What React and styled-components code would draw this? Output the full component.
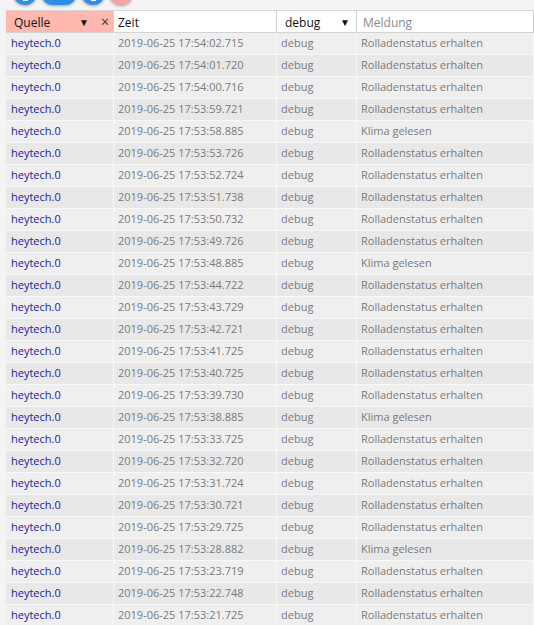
import React from "react";
import styled, { createGlobalStyle } from "styled-components";

const Global = createGlobalStyle`
  html, body { margin: 0; padding: 0; background: #f4f4f4; }
  body { font-family: "Open Sans", "Noto Sans", sans-serif; font-size: 11px; overflow: hidden; }
`;

const Page = styled.div`
  width: 534px;
  height: 625px;
  overflow: hidden;
`;

const Toolbar = styled.div`
  display: flex;
  gap: 4px;
  align-items: center;
  height: 24px;
  margin-top: -19px;
  padding-left: 13px;
  margin-bottom: 5px;
`;

const Fab = styled.div`
  height: 24px;
  width: ${(p) => (p.$wide ? 36 : 24)}px;
  border-radius: 12px;
  background: ${(p) => (p.$red ? "#f5a3a3" : "#2f8fe6")};
  box-shadow: 0 1px 3px rgba(0, 0, 0, 0.35);
  position: relative;
`;

const FabMark = styled.div`
  position: absolute;
  left: 50%;
  bottom: 4px;
  width: 5px;
  height: 3px;
  margin-left: -2px;
  background: #fff;
`;

const Table = styled.div`
  margin-left: 6px;
  display: grid;
  grid-template-columns: 108px 163px 80px 1fr;
  border-top: 1px solid #d6d6d6;
`;

const HeadCell = styled.div`
  box-sizing: border-box;
  height: 22px;
  display: flex;
  align-items: center;
  background: ${(p) => (p.$active ? "#ffb7ae" : "#fff")};
  border-right: 1px solid #cfcfcf;
  border-bottom: 1px solid #d4d4d4;
  padding: 1px 4px 0 ${(p) => p.$pad || 4}px;
  font-size: 12px;
  color: ${(p) => (p.$placeholder ? "#8a8a8a" : "#111")};
`;

const HeadLabel = styled.span`
  flex: 1;
`;

const Arrow = styled.span`
  font-size: 10px;
  color: #111;
  margin-right: ${(p) => p.$mr || 0}px;
`;

const Close = styled.span`
  font-size: 14px;
  color: #333;
  line-height: 1;
`;

const Cell = styled.div`
  box-sizing: border-box;
  height: 22px;
  display: flex;
  align-items: center;
  padding-left: ${(p) => p.$pad || 4}px;
  padding-bottom: 3px;
  background: ${(p) => (p.$even ? "#e8e8e8" : "#efefef")};
  border-right: 1px solid #f8f8f8;
  border-bottom: 1px solid #f8f8f8;
  color: ${(p) => (p.$link ? "#20209a" : "#7a7a7a")};
  white-space: nowrap;
  overflow: hidden;
`;

const rows = [
  ["17:54:02.715", "Rolladenstatus erhalten"],
  ["17:54:01.720", "Rolladenstatus erhalten"],
  ["17:54:00.716", "Rolladenstatus erhalten"],
  ["17:53:59.721", "Rolladenstatus erhalten"],
  ["17:53:58.885", "Klima gelesen"],
  ["17:53:53.726", "Rolladenstatus erhalten"],
  ["17:53:52.724", "Rolladenstatus erhalten"],
  ["17:53:51.738", "Rolladenstatus erhalten"],
  ["17:53:50.732", "Rolladenstatus erhalten"],
  ["17:53:49.726", "Rolladenstatus erhalten"],
  ["17:53:48.885", "Klima gelesen"],
  ["17:53:44.722", "Rolladenstatus erhalten"],
  ["17:53:43.729", "Rolladenstatus erhalten"],
  ["17:53:42.721", "Rolladenstatus erhalten"],
  ["17:53:41.725", "Rolladenstatus erhalten"],
  ["17:53:40.725", "Rolladenstatus erhalten"],
  ["17:53:39.730", "Rolladenstatus erhalten"],
  ["17:53:38.885", "Klima gelesen"],
  ["17:53:33.725", "Rolladenstatus erhalten"],
  ["17:53:32.720", "Rolladenstatus erhalten"],
  ["17:53:31.724", "Rolladenstatus erhalten"],
  ["17:53:30.721", "Rolladenstatus erhalten"],
  ["17:53:29.725", "Rolladenstatus erhalten"],
  ["17:53:28.882", "Klima gelesen"],
  ["17:53:23.719", "Rolladenstatus erhalten"],
  ["17:53:22.748", "Rolladenstatus erhalten"],
  ["17:53:21.725", "Rolladenstatus erhalten"],
];

export default function App() {
  return (
    <Page>
      <Global />
      <Toolbar>
        <Fab><FabMark /></Fab>
        <Fab $wide />
        <Fab><FabMark /></Fab>
        <Fab $red />
      </Toolbar>
      <Table>
        <HeadCell $active $pad={8}>
          <HeadLabel>Quelle</HeadLabel>
          <Arrow $mr={12}>▼</Arrow>
          <Close>×</Close>
        </HeadCell>
        <HeadCell>
          <HeadLabel>Zeit</HeadLabel>
        </HeadCell>
        <HeadCell $pad={8}>
          <HeadLabel>debug</HeadLabel>
          <Arrow $mr={2}>▼</Arrow>
        </HeadCell>
        <HeadCell $placeholder $pad={6}>
          <HeadLabel>Meldung</HeadLabel>
        </HeadCell>
        {rows.map(([t, m], i) => {
          const even = i % 2 === 1;
          return (
            <React.Fragment key={i}>
              <Cell $even={even} $link $pad={5}>heytech.0</Cell>
              <Cell $even={even}>2019-06-25 {t}</Cell>
              <Cell $even={even}>debug</Cell>
              <Cell $even={even}>{m}</Cell>
            </React.Fragment>
          );
        })}
      </Table>
    </Page>
  );
}
